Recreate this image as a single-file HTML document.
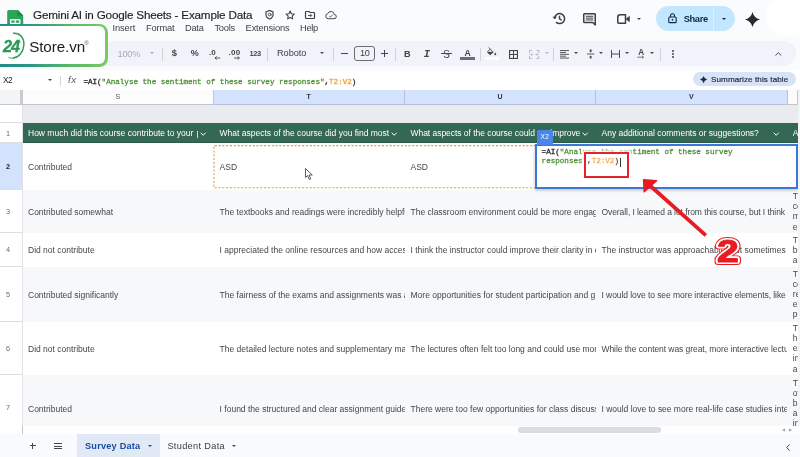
<!DOCTYPE html>
<html><head><meta charset="utf-8">
<style>
*{box-sizing:border-box;margin:0;padding:0}
html,body{width:800px;height:457px;overflow:hidden;background:#f9fbfd;font-family:"Liberation Sans",sans-serif;color:#1f1f1f}
.abs{position:absolute}
#app{position:relative;width:800px;height:457px;overflow:hidden;background:#f9fbfd;filter:blur(.350px)}
.t{position:absolute;white-space:pre;line-height:1}
svg{position:absolute;overflow:visible}
.sep{position:absolute;top:48px;width:1px;height:13px;background:#cfd3d9}
#grid{left:0;top:89.500px;width:800px;height:336.500px;background:#fff;overflow:hidden}
.colh{position:absolute;top:0;height:15px;font-size:7px;color:#333;text-align:center;line-height:14.200px;font-weight:bold;border-right:1px solid #c3c6cb;border-bottom:1px solid #c3c6cb}
.rowh{position:absolute;left:0;width:23px;background:#fff;border-right:1px solid #e0e2e5;border-bottom:1px solid #dcdee2;font-size:7.300px;color:#6b6f74;text-align:left;padding-left:5.900px}
.row{position:absolute;left:22.5px;width:778px}
.cell{position:absolute;top:0;height:100%;font-size:8.5px;color:#43474a;white-space:nowrap;overflow:hidden;display:flex;align-items:center;padding-left:5.5px;padding-top:1px}
.c1{left:0;width:191px}.c2{left:191px;width:191.5px;padding-left:6.100px}.c3{left:382.5px;width:191px}.c4{left:573.5px;width:191px}
.c5{left:770.3px;width:10px;padding-left:0;display:block;font-size:8.5px;line-height:10.1px;overflow:hidden;white-space:nowrap}
.c5 i{display:block;font-style:normal}
.hd .cell{color:#fff;padding-top:2.300px}
.alt{background:#f6f8f9}
.car{position:absolute;width:0;height:0;border-left:2.500px solid transparent;border-right:2.500px solid transparent;border-top:2.800px solid #444746;margin-left:-.300px}
</style></head><body>
<div id="app">
<!-- top bar -->
<svg style="left:7.2px;top:9.800px" width="16.400" height="22" viewBox="0 0 16 22"><path d="M1.8 0h8.7l5.5 5.5v14.7a1.8 1.8 0 0 1-1.8 1.8H1.8A1.8 1.8 0 0 1 0 20.200V1.8A1.8 1.8 0 0 1 1.8 0z" fill="#2ba558"/><path d="M10.5 0l5.500 5.500h-5.500z" fill="#188a42"/><rect x="3.4" y="9.800" width="9.200" height="7" fill="none" stroke="#fff" stroke-width="1.300"/><path d="M8 9.800v7M3.400 13.300h9.200" stroke="#fff" stroke-width="1.200"/></svg>
<div class="t" style="left:33.00px;top:8.60px;font-size:11.7px;color:#1f1f1f;letter-spacing:-0.195px;-webkit-text-stroke:.150px #1f1f1f;">Gemini AI in Google Sheets - Example Data</div>
<div class="t" style="left:112.40px;top:24.43px;font-size:9.3px;color:#3f4244;letter-spacing:-0.078px;">Insert</div>
<div class="t" style="left:146.00px;top:24.43px;font-size:9.3px;color:#3f4244;letter-spacing:-0.176px;">Format</div>
<div class="t" style="left:185.00px;top:24.43px;font-size:9.3px;color:#3f4244;letter-spacing:-0.260px;">Data</div>
<div class="t" style="left:214.40px;top:24.43px;font-size:9.3px;color:#3f4244;letter-spacing:-0.221px;">Tools</div>
<div class="t" style="left:245.60px;top:24.43px;font-size:9.3px;color:#3f4244;letter-spacing:-0.168px;">Extensions</div>
<div class="t" style="left:300.00px;top:24.43px;font-size:9.3px;color:#3f4244;letter-spacing:-0.281px;">Help</div>
<svg style="left:265px;top:10.4px" width="9" height="9.500" viewBox="0 0 18 19"><path d="M9 1L2 4v5.500c0 4 3 7 7 8.500 4-1.500 7-4.500 7-8.500V4z" fill="none" stroke="#3c4043" stroke-width="2.300"/><circle cx="9" cy="9" r="2.600" fill="none" stroke="#3c4043" stroke-width="1.600"/><path d="M11.600 7v3c0 1 1.600 1 1.600-.5" fill="none" stroke="#3c4043" stroke-width="1.400"/></svg>
<svg style="left:284.800px;top:10px" width="10.400" height="9.700" viewBox="0 0 24 23"><path d="M12 2.500l2.900 6.300 6.800.800-5 4.700 1.300 6.800L12 17.700 6 21.100l1.300-6.800-5-4.700 6.800-.800z" fill="none" stroke="#3c4043" stroke-width="2.500" stroke-linejoin="round"/></svg>
<svg style="left:305px;top:10.8px" width="10" height="8" viewBox="0 0 20 16"><path d="M1 2.500A1.500 1.500 0 0 1 2.500 1H8l2 2h7.500A1.500 1.500 0 0 1 19 4.500v9a1.500 1.500 0 0 1-1.500 1.500h-15A1.500 1.500 0 0 1 1 13.500z" fill="none" stroke="#3c4043" stroke-width="2.400"/><path d="M6 9h7M10.500 6l3 3-3 3" fill="none" stroke="#3c4043" stroke-width="1.800"/></svg>
<svg style="left:324.6px;top:10.8px" width="11.800" height="8.200" viewBox="0 0 24 17"><path d="M19 7.200A7 7 0 0 0 5.500 5.500 5.300 5.300 0 0 0 6.300 16H18.500a4.400 4.400 0 0 0 .5-8.800z" fill="none" stroke="#3c4043" stroke-width="2"/><path d="M8.500 10.500l2.400 2.300 4.800-5" fill="none" stroke="#3c4043" stroke-width="1.700"/></svg>
<svg style="left:551.5px;top:12.2px" width="14" height="13" viewBox="0 0 28 26"><path d="M5.200 13a10 10 0 1 1 3 7.200" fill="none" stroke="#3c4043" stroke-width="3"/><path d="M1 9.500l4.300 4.800 4.700-4.600z" fill="#3c4043"/><path d="M15 7.500V13.600l4.400 2.600" fill="none" stroke="#3c4043" stroke-width="2.800"/></svg>
<svg style="left:583px;top:13px" width="13" height="12.500" viewBox="0 0 26 25"><path d="M3 1.500h20a1.500 1.500 0 0 1 1.500 1.500V24l-5-5H3a1.500 1.500 0 0 1-1.500-1.500V3A1.500 1.500 0 0 1 3 1.500z" fill="none" stroke="#3c4043" stroke-width="3" stroke-linejoin="round"/><path d="M5.500 6.500h15M5.500 10.200h15M5.500 13.900h15" stroke="#3c4043" stroke-width="2"/></svg>
<svg style="left:617px;top:14px" width="13.500" height="10.200" viewBox="0 0 27 20"><path d="M1.500 6.500a5 5 0 0 1 5-5H17v17H3.500a2 2 0 0 1-2-2z" fill="none" stroke="#3c4043" stroke-width="3" stroke-linejoin="round"/><path d="M17 10l8.500-6.500v13z" fill="#3c4043"/></svg>
<div class="car" style="left:637px;top:18px"></div>
<div class="abs" style="left:656px;top:6.300px;width:78.800px;height:25.200px;border-radius:12.600px;background:#c2e7ff"></div>
<div class="abs" style="left:713px;top:6.500px;width:1px;height:24.600px;background:#dbeffd"></div>
<svg style="left:668px;top:13.300px" width="9" height="10.400" viewBox="0 0 18 21"><rect x="1.500" y="8" width="15" height="11.500" rx="2" fill="none" stroke="#0b2a4a" stroke-width="2.200"/><path d="M5 8V5.500a4 4 0 0 1 8 0V8" fill="none" stroke="#0b2a4a" stroke-width="2.200"/><circle cx="9" cy="13.800" r="1.800" fill="#0b2a4a"/></svg>
<div class="t" style="left:683.70px;top:14.93px;font-size:9.3px;color:#0b2a4a;letter-spacing:-0.349px;font-weight:bold;">Share</div>
<div class="car" style="left:722.2px;top:18px;border-top-color:#0b2a4a"></div>
<svg style="left:745.2px;top:11.600px" width="15" height="15" viewBox="0 0 20 20"><path d="M10 0Q12 8 20 10Q12 12 10 20Q8 12 0 10Q8 8 10 0Z" fill="#2b2b2b"/></svg>
<div class="abs" style="left:766px;top:-4px;width:44px;height:40px;border-radius:20px;background:#fff;filter:blur(1.200px)"></div>
<!-- toolbar -->
<div class="abs" style="left:-14px;top:41.400px;width:810px;height:25px;border-radius:12.500px;background:#f0f3f9"></div>
<div class="t" style="left:117.60px;top:49.83px;font-size:9.3px;color:#a9adb3;letter-spacing:-0.295px;">100%</div>
<div class="car" style="left:149.800px;top:52.400px;border-top-color:#a3a7ad"></div>
<div class="sep" style="left:162.1px"></div>
<div class="sep" style="left:267.1px"></div>
<div class="sep" style="left:332.9px"></div>
<div class="sep" style="left:394.5px"></div>
<div class="sep" style="left:479.5px"></div>
<div class="sep" style="left:552.5px"></div>
<div class="sep" style="left:659.5px"></div>
<div class="t" style="left:171.80px;top:48.73px;font-size:9.3px;color:#444746;font-weight:bold;">$</div>
<div class="t" style="left:190.80px;top:49.18px;font-size:9px;color:#444746;letter-spacing:-0.416px;font-weight:bold;">%</div>
<div class="t" style="left:209.00px;top:48.83px;font-size:8px;color:#444746;font-weight:bold;">.0</div>
<svg style="left:214px;top:55.800px" width="6.400" height="4" viewBox="0 0 12 8"><path d="M12 4H2M5 .800L1.500 4 5 7.200" fill="none" stroke="#444746" stroke-width="1.800"/></svg>
<div class="t" style="left:228.40px;top:48.83px;font-size:8px;color:#444746;letter-spacing:0.292px;font-weight:bold;">.00</div>
<svg style="left:233.800px;top:55.800px" width="6.400" height="4" viewBox="0 0 12 8"><path d="M0 4h10M7 .800L10.500 4 7 7.200" fill="none" stroke="#444746" stroke-width="1.800"/></svg>
<div class="t" style="left:249.60px;top:50.34px;font-size:7.4px;color:#444746;letter-spacing:-0.448px;font-weight:bold;">123</div>
<div class="t" style="left:277.00px;top:49.11px;font-size:9.2px;color:#3a3d40;letter-spacing:-0.040px;">Roboto</div>
<div class="car" style="left:319.800px;top:52.400px"></div>
<div class="abs" style="left:340.600px;top:52.900px;width:7px;height:1.100px;background:#444746"></div>
<div class="abs" style="left:354.400px;top:46.400px;width:20.600px;height:14.600px;border:.900px solid #6a6e73;border-radius:3px"></div>
<div class="t" style="left:360.00px;top:49.11px;font-size:9.2px;color:#3a3d40;letter-spacing:-0.317px;">10</div>
<div class="abs" style="left:381px;top:52.900px;width:6.600px;height:1.100px;background:#444746"></div><div class="abs" style="left:383.750px;top:50.100px;width:1.100px;height:6.600px;background:#444746"></div>
<div class="t" style="left:404.00px;top:49.61px;font-size:9.2px;color:#444746;font-weight:bold;">B</div>
<div class="t" style="left:423.80px;top:49.43px;font-size:10.4px;color:#444746;font-family:'Liberation Mono',monospace;font-weight:bold;font-style:italic;">I</div>
<div class="t" style="left:443.30px;top:49.54px;font-size:10px;color:#444746;">S</div>
<div class="abs" style="left:441.400px;top:53px;width:10.600px;height:1px;background:#444746"></div>
<div class="t" style="left:464.40px;top:48.72px;font-size:8.6px;color:#444746;font-weight:bold;">A</div>
<div class="abs" style="left:460px;top:57px;width:15px;height:2.600px;background:#6b6f75"></div>
<svg style="left:487.400px;top:47px" width="10" height="9" viewBox="0 0 20 18"><path d="M3.500 1l9 9-5 5a1.400 1.400 0 0 1-2 0L1.500 11a1.400 1.400 0 0 1 0-2L6.500 4" fill="none" stroke="#444746" stroke-width="1.800"/><path d="M2 10.500h10z" stroke="#444746" stroke-width="1"/><path d="M1.300 10.200h11L7 15.200a1 1 0 0 1-1.500 0z" fill="#444746"/><path d="M16.500 11s2 2.400 2 3.700a2 2 0 0 1-4 0c0-1.300 2-3.700 2-3.700z" fill="#444746"/></svg>
<div class="abs" style="left:485px;top:57px;width:14px;height:3px;background:#fdfdfe"></div>
<svg style="left:509px;top:49.600px" width="9" height="9" viewBox="0 0 18 18"><rect x="1.100" y="1.100" width="15.800" height="15.800" fill="none" stroke="#444746" stroke-width="2.200"/><path d="M9 1v16M1 9h16" stroke="#444746" stroke-width="2"/></svg>
<svg style="left:528.600px;top:49.600px" width="10.400" height="9" viewBox="0 0 21 18"><path d="M1 6V1h5M15 1h5v5M20 12v5h-5M6 17H1v-5" fill="none" stroke="#b4b8be" stroke-width="2"/><path d="M1 9h6M5 6.500L7.500 9 5 11.500M20 9h-6M16 6.500L13.500 9 16 11.500" fill="none" stroke="#b4b8be" stroke-width="1.600"/></svg>
<div class="car" style="left:545.200px;top:52.400px;border-top-color:#b4b8be"></div>
<svg style="left:560px;top:49.600px" width="9" height="8.600" viewBox="0 0 18 17"><path d="M0 1h18M0 4.750h12M0 8.500h18M0 12.250h12M0 16h18" stroke="#444746" stroke-width="1.800"/></svg>
<div class="car" style="left:573.800px;top:52.400px"></div>
<svg style="left:586.600px;top:49px" width="7.400" height="10" viewBox="0 0 15 20"><path d="M0 10h15" stroke="#444746" stroke-width="1.800"/><path d="M7.500 0v4M7.500 16v4" stroke="#444746" stroke-width="1.800"/><path d="M4 3l3.500 4L11 3zM4 17l3.500-4 3.500 4z" fill="#444746"/></svg>
<div class="car" style="left:599.400px;top:52.400px"></div>
<svg style="left:611px;top:50px" width="9" height="8" viewBox="0 0 18 16"><path d="M1 0v16M17 0v16M1 8h16" stroke="#444746" stroke-width="1.900" fill="none"/></svg>
<div class="car" style="left:624.800px;top:52.400px"></div>
<div class="t" style="left:638.20px;top:49.26px;font-size:8.2px;color:#444746;font-weight:bold;">A</div>
<svg style="left:637.400px;top:56.400px" width="8" height="2.400" viewBox="0 0 16 5"><path d="M0 2.500h13M10.500 0L13.500 2.500 10.500 5" fill="none" stroke="#444746" stroke-width="1.500"/></svg>
<div class="car" style="left:650.200px;top:52.400px"></div>
<div class="abs" style="left:671.800px;top:50.4px;width:1.900px;height:1.900px;border-radius:1px;background:#444746"></div>
<div class="abs" style="left:671.800px;top:53.3px;width:1.900px;height:1.900px;border-radius:1px;background:#444746"></div>
<div class="abs" style="left:671.800px;top:56.2px;width:1.900px;height:1.900px;border-radius:1px;background:#444746"></div>
<svg style="left:775px;top:52.200px" width="6.600" height="3.800" viewBox="0 0 13 7.500"><path d="M.800 7L6.500 1.300 12.200 7" fill="none" stroke="#444746" stroke-width="1.900"/></svg>
<!-- formula bar -->
<div class="abs" style="left:0;top:69.500px;width:800px;height:20px;background:#fff"></div>
<div class="t" style="left:2.90px;top:76.37px;font-size:8.3px;color:#1f1f1f;letter-spacing:-0.378px;">X2</div>
<div class="car" style="left:48.400px;top:79.200px;border-top-color:#3c4043;border-width:2.800px 2.600px 0 2.600px"></div>
<div class="abs" style="left:60.400px;top:76px;width:1px;height:9.500px;background:#d3d6da"></div>
<div class="t" style="left:68.00px;top:75.30px;font-size:9.8px;color:#5a5e63;letter-spacing:0.487px;font-style:italic;">fx</div>
<div class="t" style="left:83.400px;top:78.87px;font-size:7.6px;font-family:'Liberation Mono',monospace;-webkit-text-stroke:.280px;letter-spacing:-0.008px;color:#202124">=AI(<span style="color:#4f8f3a">"Analyse the sentiment of these survey responses"</span>,<span style="color:#f2a33c">T2:V2</span>)</div>
<div class="abs" style="left:693.400px;top:72.300px;width:102.400px;height:13.800px;border-radius:7px;background:#d9e3f8"></div>
<svg style="left:699.600px;top:75.700px" width="7.200" height="7.200" viewBox="0 0 20 20"><path d="M10 0Q12 8 20 10Q12 12 10 20Q8 12 0 10Q8 8 10 0Z" fill="#1f2a44"/></svg>
<div class="t" style="left:711.00px;top:75.54px;font-size:8.1px;color:#1f2a44;letter-spacing:0.086px;-webkit-text-stroke:.200px #1f2a44;">Summarize this table</div>
<!-- grid -->
<div class="abs" id="grid">
<div class="colh" style="left:0;width:23px;background:#f3f4f6;border-right:3px solid #c9cbcf"></div>
<div class="colh" style="left:23px;width:190.500px;background:#fcfcfd;font-weight:normal;color:#555">S</div>
<div class="colh" style="left:213.500px;width:191.500px;background:#d3e3fd;border-color:#b6c1d8">T</div>
<div class="colh" style="left:405px;width:191px;background:#d3e3fd;border-color:#b6c1d8">U</div>
<div class="colh" style="left:596px;width:191.500px;background:#d3e3fd;border-color:#b6c1d8">V</div>
<div class="colh" style="left:787.500px;width:10.500px;background:#fcfcfd"></div>
<div class="abs" style="left:798px;top:0;width:2px;height:15px;background:#ececec"></div>
<div class="abs" style="left:22.500px;top:15px;width:778px;height:18.100px;background:#e9ebee"></div>
<div class="rowh" style="top:15px;height:18.100px"></div>
<div class="rowh" style="top:33.099999999999994px;height:20.200px;line-height:21.400px">1</div>
<div class="row hd" style="top:33.099999999999994px;height:20.200px;background:#356854;border-bottom:1px solid #2c5a48"><div class="cell c1">How much did this course contribute to your</div><div class="cell c2">What aspects of the course did you find most</div><div class="cell c3" style="letter-spacing:-.040px">What aspects of the course could we improve</div><div class="cell c4">Any additional comments or suggestions?</div><div class="cell" style="left:770.300px;width:10px;padding-left:0">A</div></div>
<svg style="left:200.2px;top:42.099999999999994px" width="6.400" height="4" viewBox="0 0 6.400 4"><path d="M.700 .700L3.200 3.300 5.700 .700" fill="none" stroke="#fff" stroke-width="1"/></svg>
<svg style="left:391.3px;top:42.099999999999994px" width="6.400" height="4" viewBox="0 0 6.400 4"><path d="M.700 .700L3.200 3.300 5.700 .700" fill="none" stroke="#fff" stroke-width="1"/></svg>
<svg style="left:582px;top:42.099999999999994px" width="6.400" height="4" viewBox="0 0 6.400 4"><path d="M.700 .700L3.200 3.300 5.700 .700" fill="none" stroke="#fff" stroke-width="1"/></svg>
<svg style="left:773.2px;top:42.099999999999994px" width="6.400" height="4" viewBox="0 0 6.400 4"><path d="M.700 .700L3.200 3.300 5.700 .700" fill="none" stroke="#fff" stroke-width="1"/></svg>
<div class="abs" style="left:196.600px;top:41.5px;width:.800px;height:6.500px;background:#c9dbd2"></div>
<div class="rowh" style="top:53.5px;height:47px;line-height:47px;background:#d3e3fd;color:#1f1f1f;font-weight:bold;">2</div>
<div class="row" style="top:53.5px;height:47px"><div class="cell c1">Contributed</div><div class="cell c2">ASD</div><div class="cell c3">ASD</div></div>
<div class="rowh" style="top:100.5px;height:43px;line-height:43px;">3</div>
<div class="row alt" style="top:100.5px;height:43px"><div class="cell c1">Contributed somewhat</div><div class="cell c2">The textbooks and readings were incredibly helpful in</div><div class="cell c3">The classroom environment could be more engaging</div><div class="cell c4" style="letter-spacing:-0.075px">Overall, I learned a lot from this course, but I think</div><div class="cell c5" style="padding-top:1.3px"><i>The</i><i>course</i><i>materials</i><i>engaged</i></div></div>
<div class="rowh" style="top:143.5px;height:33.5px;line-height:33.5px;">4</div>
<div class="row" style="top:143.5px;height:33.5px"><div class="cell c1">Did not contribute</div><div class="cell c2">I appreciated the online resources and how accessible</div><div class="cell c3">I think the instructor could improve their clarity in e</div><div class="cell c4" style="letter-spacing:0.02px">The instructor was approachable, but sometimes</div><div class="cell c5" style="padding-top:1.6px"><i>The</i><i>best</i><i>aspect</i></div></div>
<div class="rowh" style="top:177.0px;height:55.5px;line-height:55.5px;">5</div>
<div class="row alt" style="top:177.0px;height:55.5px"><div class="cell c1">Contributed significantly</div><div class="cell c2">The fairness of the exams and assignments was a</div><div class="cell c3">More opportunities for student participation and g</div><div class="cell c4" style="letter-spacing:-0.065px">I would love to see more interactive elements, like</div><div class="cell c5" style="padding-top:2.5px"><i>The</i><i>course</i><i>really</i><i>exceeded</i><i>personal</i></div></div>
<div class="rowh" style="top:232.5px;height:53px;line-height:53px;">6</div>
<div class="row" style="top:232.5px;height:53px"><div class="cell c1">Did not contribute</div><div class="cell c2">The detailed lecture notes and supplementary mat</div><div class="cell c3">The lectures often felt too long and could use more</div><div class="cell c4" style="letter-spacing:-0.065px">While the content was great, more interactive lectu</div><div class="cell c5" style="padding-top:1.2px"><i>The</i><i>homework</i><i>exercises</i><i>improved</i><i>analysis</i></div></div>
<div class="rowh" style="top:285.5px;height:66px;line-height:66px;">7</div>
<div class="row alt" style="top:285.5px;height:66px"><div class="cell c1">Contributed</div><div class="cell c2">I found the structured and clear assignment guide</div><div class="cell c3">There were too few opportunities for class discuss</div><div class="cell c4" style="letter-spacing:-0.02px">I would love to see more real-life case studies inte</div><div class="cell c5" style="padding-top:2.7px"><i>The</i><i>overall</i><i>balance</i><i>and</i><i>instruction</i><i>pace</i></div></div>
</div>
<!-- range highlight -->
<svg style="left:0;top:0" width="800" height="457" viewBox="0 0 800 457"><path d="M536 145.600H214V187.800H536" fill="none" stroke="#dfa43a" stroke-width="1.100" stroke-dasharray="2.100 1.700"/></svg>
<svg style="left:305.300px;top:167.500px" width="8.500" height="12.500" viewBox="0 0 17 25"><path d="M1 1v18l4.200-4 3.300 8 3-1.300-3.300-7.700H14.500z" fill="#fff" stroke="#333" stroke-width="1.600" stroke-linejoin="round"/></svg>
<div class="abs" style="left:535px;top:144.200px;width:263px;height:45.200px;background:#fff;border:2px solid #3c78d8;box-shadow:0 1px 3px rgba(60,64,67,.35)"></div>
<div class="abs" style="left:536.500px;top:129.500px;width:16.500px;height:15px;background:#4a86e8;border-radius:1.500px 1.500px 0 0"></div>
<div class="t" style="left:540.60px;top:134.01px;font-size:6.6px;color:#fff;letter-spacing:0.261px;">X2</div>
<div class="t" style="left:541.600px;top:148.77px;font-size:7.6px;font-family:'Liberation Mono',monospace;-webkit-text-stroke:.280px;letter-spacing:-0.008px;color:#202124">=AI(<span style="color:#4f8f3a">"Analyse the sentiment of these survey</span></div>
<div class="t" style="left:541.600px;top:158.17px;font-size:7.6px;font-family:'Liberation Mono',monospace;-webkit-text-stroke:.280px;letter-spacing:-0.008px;color:#202124"><span style="color:#4f8f3a">responses"</span>,<span style="color:#f2a33c">T2:V2</span>)</div>
<div class="abs" style="left:619.800px;top:157.500px;width:1px;height:9px;background:#111"></div>
<div class="abs" style="left:584px;top:152px;width:45.400px;height:26px;border:2.400px solid #e0262b;background:rgba(255,255,255,.150);box-shadow:0 0 2.500px 2.500px rgba(255,255,255,.880),inset 0 0 2px 1.500px rgba(255,255,255,.850)"></div>
<svg style="left:0;top:0" width="800" height="457" viewBox="0 0 800 457"><path d="M705.800 235.400L650.500 186" stroke="#e51c23" stroke-width="3.700" fill="none"/><path d="M643.600 179.800L656.600 180.800 644.200 191.800z" fill="#e51c23" stroke="#e51c23" stroke-width="1.500" stroke-linejoin="round"/><text x="727.850" y="262.300" text-anchor="middle" font-family="Liberation Sans, sans-serif" font-weight="bold" font-size="30.500" transform="translate(727.850 0) scale(1.280 1) translate(-727.850 0)" fill="#e51c23" stroke="#e51c23" stroke-width="6" stroke-linejoin="round">2</text><text x="727.850" y="262.300" text-anchor="middle" font-family="Liberation Sans, sans-serif" font-weight="bold" font-size="30.500" transform="translate(727.850 0) scale(1.280 1) translate(-727.850 0)" fill="#fff" stroke="#fff" stroke-width="4.200" stroke-linejoin="round">2</text><text x="727.850" y="262.300" text-anchor="middle" font-family="Liberation Sans, sans-serif" font-weight="bold" font-size="30.500" transform="translate(727.850 0) scale(1.280 1) translate(-727.850 0)" fill="#e51c23" stroke="#e51c23" stroke-width="1.100" stroke-linejoin="round">2</text></svg>
<div class="abs" style="left:798px;top:89px;width:2px;height:345px;background:#f3f4f6"></div>
<!-- logo -->
<div class="abs" style="left:-8px;top:23.800px;width:116px;height:43.200px;border-radius:8.500px;background:linear-gradient(90deg,#1f868c 0%,#2a9587 30%,#55b56a 65%,#7acb62 100%)"></div>
<div class="abs" style="left:-8px;top:26.400px;width:113.400px;height:38px;border-radius:6px;background:#fff"></div>
<svg style="left:0;top:30px" width="30" height="34" viewBox="0 0 30 34"><path d="M13 3.300C19.500 2.300 24.600 8 23.800 15.500 23.200 22.500 18.500 27.600 12.500 28.200" fill="none" stroke="#2e9e5b" stroke-width="1.500"/><path d="M8.500 27.300c1.300.700 2.600 1 4 .900" fill="none" stroke="#2e9e5b" stroke-width=".900"/></svg>
<div class="t" style="left:3.10px;top:38.12px;font-size:16.4px;color:#2a9a57;letter-spacing:-1.317px;font-weight:bold;font-style:italic;-webkit-text-stroke:.300px #2a9a57;">24</div>
<div class="t" style="left:18.60px;top:40.72px;font-size:3.4px;color:#2a9a57;font-weight:bold;">h</div>
<div class="t" style="left:29.20px;top:38.83px;font-size:15.2px;color:#1d1d1f;letter-spacing:-0.095px;">Store.vn</div>
<div class="t" style="left:84.60px;top:40.86px;font-size:5.6px;color:#444;">®</div>
<!-- bottom -->
<div class="abs" style="left:0;top:426px;width:800px;height:8px;background:#fff"></div>
<div class="abs" style="left:22px;top:426px;width:1px;height:8px;background:#c3c6cb"></div>
<div class="abs" style="left:518px;top:427.300px;width:143px;height:5.400px;border-radius:2.700px;background:#dadce0"></div>
<div class="t" style="left:781.500px;top:428px;font-size:4px;color:#9aa0a6">◀</div><div class="t" style="left:789px;top:428px;font-size:4px;color:#9aa0a6">▶</div>
<div class="abs" style="left:0;top:433.600px;width:800px;height:24px;background:#f8fafd"></div>
<div class="abs" style="left:77.400px;top:433.600px;width:82.600px;height:24px;background:#e1e9f7"></div>
<div class="abs" style="left:29.500px;top:445.400px;width:6.400px;height:1px;background:#444746"></div><div class="abs" style="left:32.200px;top:442.700px;width:1px;height:6.400px;background:#444746"></div>
<div class="abs" style="left:53.800px;top:443.4px;width:8px;height:1px;background:#444746"></div>
<div class="abs" style="left:53.800px;top:445.5px;width:8px;height:1px;background:#444746"></div>
<div class="abs" style="left:53.800px;top:447.6px;width:8px;height:1px;background:#444746"></div>
<div class="t" style="left:85.00px;top:441.61px;font-size:9.2px;color:#1a4da1;letter-spacing:0.207px;font-weight:bold;">Survey Data</div>
<div class="car" style="left:147.800px;top:445px;border-top-color:#1a4da1"></div>
<div class="t" style="left:167.40px;top:441.61px;font-size:9.2px;color:#3c4043;letter-spacing:0.330px;">Student Data</div>
<div class="car" style="left:232.400px;top:445px"></div>
<svg style="left:785.500px;top:443.500px" width="4" height="7" viewBox="0 0 4 7"><path d="M3.500 .500L.700 3.500 3.500 6.500" fill="none" stroke="#444746" stroke-width="1"/></svg>
</div>
</body></html>
